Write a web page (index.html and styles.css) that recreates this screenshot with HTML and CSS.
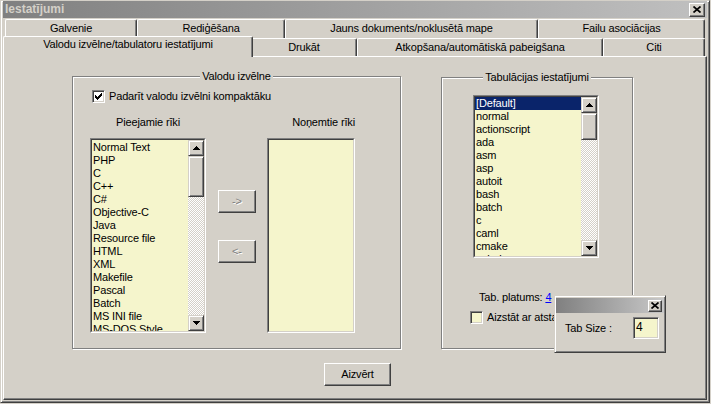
FILE: index.html
```html
<!DOCTYPE html>
<html lang="lv">
<head>
<meta charset="utf-8">
<title>Iestatījumi</title>
<link rel="stylesheet" href="styles.css">
</head>
<body>
<div class="window">
  <div class="titlebar">
    <span class="title">Iestatījumi</span>
    <span class="capbtn"><svg width="8" height="7" viewBox="0 0 8 7"><path d="M0.5 0.5 L7.5 6.5 M7.5 0.5 L0.5 6.5" stroke="#000" stroke-width="1.7"/></svg></span>
  </div>

  <div class="tabs">
    <div class="tabrow row-back">
      <div class="tab t-general">Galvenie</div>
      <div class="tab t-edit">Rediģēšana</div>
      <div class="tab t-newdoc">Jauns dokuments/noklusētā mape</div>
      <div class="tab t-assoc">Failu asociācijas</div>
    </div>
    <div class="tabrow row-front">
      <div class="tab t-lang active">Valodu izvēlne/tabulatoru iestatījumi</div>
      <div class="tab t-print">Drukāt</div>
      <div class="tab t-backup">Atkopšana/automātiskā pabeigšana</div>
      <div class="tab t-misc">Citi</div>
    </div>
  </div>

  <div class="panel">
    <div class="groups">
      <div class="group group-lang">
        <div class="group-title">Valodu izvēlne</div>
        <div class="check-row">
          <span class="checkbox checkbox-white"><svg width="7" height="7" viewBox="0 0 7 7"><path d="M0 2h1v1h1v1h1V3h1V2h1V1h1V0h1v3h-1v1h-1v1h-1v1h-1v1h-1V6h-1V5h-1V4H0z" fill="#000"/></svg></span>
          <span>Padarīt valodu izvēlni kompaktāku</span>
        </div>
        <div class="lang-cols">
          <div class="lang-col col-avail">
            <div class="col-head">Pieejamie rīki</div>
            <div class="listbox list-avail">
              <div class="listbox-inner">
                <ul class="items">
                  <li>Normal Text</li>
                  <li>PHP</li>
                  <li>C</li>
                  <li>C++</li>
                  <li>C#</li>
                  <li>Objective-C</li>
                  <li>Java</li>
                  <li>Resource file</li>
                  <li>HTML</li>
                  <li>XML</li>
                  <li>Makefile</li>
                  <li>Pascal</li>
                  <li>Batch</li>
                  <li>MS INI file</li>
                  <li>MS-DOS Style</li>
                  <li>ASP</li>
                </ul>
                <div class="vscroll">
                  <div class="sb-btn"><svg width="7" height="4" viewBox="0 0 7 4"><path d="M3 0h1v1h1v1h1v1h1v1H0V3h1V2h1V1h1z" fill="#000"/></svg></div>
                  <div class="sb-thumb thumb-avail"></div>
                  <div class="sb-track"></div>
                  <div class="sb-btn"><svg width="7" height="4" viewBox="0 0 7 4"><path d="M0 0h7v1H6v1H5v1H4v1H3V3H2V2H1V1H0z" fill="#000"/></svg></div>
                </div>
              </div>
            </div>
          </div>
          <div class="lang-col col-move">
            <button class="btn btn-move" disabled>-&gt;</button>
            <button class="btn btn-move" disabled>&lt;-</button>
          </div>
          <div class="lang-col col-removed">
            <div class="col-head col-head-right">Noņemtie rīki</div>
            <div class="listbox list-removed">
              <div class="listbox-inner"></div>
            </div>
          </div>
        </div>
      </div>

      <div class="group group-tab">
        <div class="group-title">Tabulācijas iestatījumi</div>
        <div class="listbox list-tabs">
          <div class="listbox-inner">
            <ul class="items items-flush">
              <li class="selected">[Default]</li>
              <li>normal</li>
              <li>actionscript</li>
              <li>ada</li>
              <li>asm</li>
              <li>asp</li>
              <li>autoit</li>
              <li>bash</li>
              <li>batch</li>
              <li>c</li>
              <li>caml</li>
              <li>cmake</li>
              <li>cobol</li>
            </ul>
            <div class="vscroll">
              <div class="sb-btn"><svg width="7" height="4" viewBox="0 0 7 4"><path d="M3 0h1v1h1v1h1v1h1v1H0V3h1V2h1V1h1z" fill="#000"/></svg></div>
              <div class="sb-thumb thumb-tabs"></div>
              <div class="sb-track"></div>
              <div class="sb-btn"><svg width="7" height="4" viewBox="0 0 7 4"><path d="M0 0h7v1H6v1H5v1H4v1H3V3H2V2H1V1H0z" fill="#000"/></svg></div>
            </div>
          </div>
        </div>
        <div class="tab-width">Tab. platums: <a class="link" href="#">4</a></div>
        <div class="check-row check-spaces">
          <span class="checkbox"></span>
          <span>Aizstāt ar atstarpēm</span>
        </div>
      </div>
    </div>

    <div class="actions">
      <button class="btn btn-close">Aizvērt</button>
    </div>
  </div>

  <div class="popup">
    <div class="popup-title">
      <span class="capbtn capbtn-small"><svg width="8" height="7" viewBox="0 0 8 7"><path d="M0.5 0.5 L7.5 6.5 M7.5 0.5 L0.5 6.5" stroke="#000" stroke-width="1.7"/></svg></span>
    </div>
    <div class="popup-body">
      <span>Tab Size :</span>
      <span class="edit">4</span>
    </div>
  </div>
</div>
</body>
</html>
```

FILE: styles.css
```css
* {
  box-sizing: border-box;
}

html,
body {
  margin: 0;
  padding: 0;
  background: #d4d0c8;
}

body {
  font: 11px/13px "Liberation Sans", Arial, sans-serif;
  letter-spacing: -0.15px;
  color: #000;
}

/* dialog frame */
.window {
  position: relative;
  display: flex;
  flex-direction: column;
  width: 710px;
  height: 403px;
  padding: 0 2px 2px 2px;
  background: #d4d0c8;
  border: 1px solid;
  border-color: #d4d0c8 #404040 #404040 #d4d0c8;
  box-shadow: inset 1px 1px #fff, inset -1px -1px #808080;
}

.titlebar {
  display: flex;
  align-items: center;
  justify-content: space-between;
  height: 17px;
  padding: 0 2px;
  background: linear-gradient(to right, #808080, #c0c0c0);
}

.title {
  font-weight: bold;
  font-size: 12px;
  letter-spacing: 0;
  color: #d4d0c8;
}

.capbtn {
  display: flex;
  align-items: center;
  justify-content: center;
  width: 16px;
  height: 14px;
  background: #d4d0c8;
  border: 1px solid;
  border-color: #fff #404040 #404040 #fff;
  box-shadow: inset -1px -1px #808080;
}

.capbtn-small {
  width: 14px;
  height: 12px;
}

/* tab strip */
.tabs {
  margin-top: 1px;
  padding-left: 2px;
}

.tabrow {
  display: flex;
  align-items: flex-end;
}

.row-back {
  height: 19px;
}

.row-front {
  height: 18px;
}

.tab {
  height: 100%;
  background: #d4d0c8;
  border-top: 1px solid #fff;
  border-left: 1px solid #fff;
  border-right: 1px solid #404040;
  border-radius: 2px 2px 0 0;
  box-shadow: inset -1px 0 #808080;
  text-align: center;
  line-height: 17px;
  white-space: nowrap;
}

.t-general { width: 132px; }
.t-edit { width: 148px; }
.t-newdoc { width: 253px; }
.t-assoc { width: 167px; }
.t-lang { width: 246px; }
.t-print { width: 106px; }
.t-backup { width: 246px; }
.t-misc { width: 102px; }

.tab.active {
  position: relative;
  z-index: 2;
  width: 250px;
  height: 21px;
  margin: 0 -2px -1px;
  line-height: 15px;
}

/* page body */
.panel {
  flex: 1;
  background: #d4d0c8;
  border: 1px solid;
  border-color: #fff #404040 #404040 #fff;
  box-shadow: inset -1px -1px #808080;
}

.groups {
  display: flex;
  align-items: flex-start;
  padding: 19px 0 0 68px;
}

.group {
  border: 1px solid #808080;
  box-shadow: 1px 1px #fff, inset 1px 1px #fff;
}

.group-title {
  width: max-content;
  margin: -7px auto 0;
  padding: 0 2px;
  background: #d4d0c8;
}

.group-lang {
  width: 329px;
  height: 273px;
}

.group-tab {
  width: 192px;
  height: 272px;
  margin: 1px 0 0 40px;
}

.check-row {
  display: flex;
  align-items: center;
  gap: 4px;
  margin-top: 7px;
  padding-left: 19px;
}

.checkbox {
  display: flex;
  align-items: center;
  justify-content: center;
  width: 13px;
  height: 13px;
  background: #f5f5cc;
  border: 1px solid;
  border-color: #808080 #fff #fff #808080;
  box-shadow: inset 1px 1px #404040, inset -1px -1px #d4d0c8;
}

.checkbox-white {
  background: #fff;
}

.lang-cols {
  display: flex;
  margin-top: 13px;
  padding-left: 17px;
}

.lang-col {
  display: flex;
  flex-direction: column;
}

.col-avail {
  width: 116px;
}

.col-move {
  width: 38px;
  margin-left: 12px;
  padding-top: 74px;
  gap: 27px;
}

.col-removed {
  width: 88px;
  margin-left: 11px;
}

.col-head {
  height: 13px;
  margin-bottom: 9px;
  text-align: center;
  white-space: nowrap;
}

.col-head-right {
  text-align: right;
  padding-right: 1px;
  margin-right: -1px;
}

/* list boxes */
.listbox {
  height: 195px;
  border: 1px solid;
  border-color: #808080 #fff #fff #808080;
}

.listbox-inner {
  display: flex;
  height: 100%;
  background: #f5f5cc;
  border: 1px solid;
  border-color: #404040 #d4d0c8 #d4d0c8 #404040;
}

.items {
  flex: 1;
  min-width: 0;
  margin: 0;
  padding: 1px 0 0 0;
  list-style: none;
  overflow: hidden;
  white-space: nowrap;
}

.items li {
  height: 13px;
  padding-left: 1px;
}

.items-flush {
  padding-top: 0;
}

.items li.selected {
  background: #0a246a;
  color: #fff;
}

.vscroll {
  display: flex;
  flex-direction: column;
  width: 16px;
}

.sb-btn,
.sb-thumb {
  flex: none;
  background: #d4d0c8;
  border: 1px solid;
  border-color: #d4d0c8 #404040 #404040 #d4d0c8;
  box-shadow: inset 1px 1px #fff, inset -1px -1px #808080;
}

.sb-btn {
  display: flex;
  align-items: center;
  justify-content: center;
  height: 16px;
}

.thumb-avail {
  height: 41px;
}

.thumb-tabs {
  height: 27px;
}

.sb-track {
  flex: 1;
  background: repeating-conic-gradient(#fff 0 25%, #d4d0c8 0 50%) 0 0 / 2px 2px;
}

.list-tabs {
  width: 126px;
  height: 163px;
  margin: 11px 0 0 31px;
}

.tab-width {
  margin: 33px 0 0 37px;
}

.link {
  color: #0000ff;
}

.check-spaces {
  margin-top: 7px;
  padding-left: 28px;
  white-space: nowrap;
}

/* push buttons */
.btn {
  padding: 0;
  font: inherit;
  letter-spacing: inherit;
  color: #000;
  background: #d4d0c8;
  border: 1px solid;
  border-color: #fff #404040 #404040 #fff;
  box-shadow: inset -1px -1px #808080;
}

.btn:disabled {
  color: #808080;
  text-shadow: 1px 1px #fff;
}

.btn-move {
  height: 23px;
}

.actions {
  display: flex;
  justify-content: center;
  margin-top: 14px;
  padding-left: 5px;
}

.btn-close {
  width: 67px;
  height: 23px;
}

/* floating tab size window */
.popup {
  position: absolute;
  left: 553px;
  top: 294px;
  width: 112px;
  height: 58px;
  padding: 2px 1px 1px 1px;
  background: #d4d0c8;
  border: 1px solid;
  border-color: #d4d0c8 #404040 #404040 #d4d0c8;
  box-shadow: inset 1px 1px #fff, inset -1px -1px #808080;
}

.popup-title {
  display: flex;
  align-items: center;
  justify-content: flex-end;
  height: 15px;
  padding-right: 2px;
  background: linear-gradient(to right, #808080, #c8c8c8);
}

.popup-body {
  display: flex;
  align-items: center;
  justify-content: space-between;
  padding: 4px 5px 0 9px;
}

.edit {
  width: 26px;
  height: 22px;
  padding-left: 2px;
  line-height: 18px;
  background: #f5f5cc;
  border: 1px solid;
  border-color: #808080 #fff #fff #808080;
  box-shadow: inset 1px 1px #404040, inset -1px -1px #d4d0c8;
  font-size: 12px;
}
```
